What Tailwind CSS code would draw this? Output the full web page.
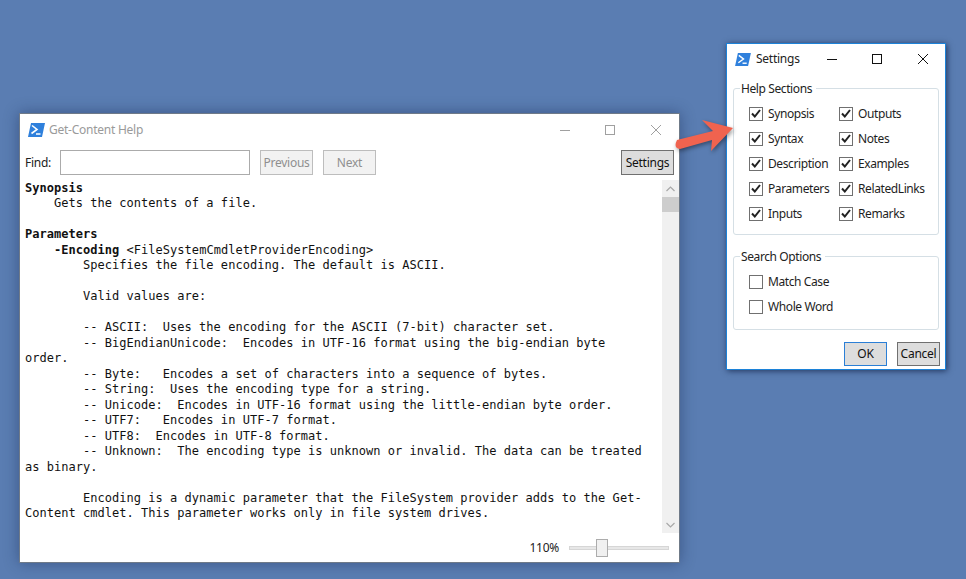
<!doctype html>
<html>
<head>
<meta charset="utf-8">
<script src="https://cdn.jsdelivr.net/npm/@tailwindcss/browser@4"></script>
</head>
<body class="bg-[#5a7db2] overflow-hidden">
<div class="relative w-[966px] h-[579px] overflow-hidden bg-[#5a7db2] font-['Noto_Sans',sans-serif] text-[12px] tracking-[-0.25px] text-[#1e1e1e]">

  <!-- Main help window -->
  <section class="absolute left-[19px] top-[113px] w-[661px] h-[450px] flex flex-col bg-white border border-[#6f7a88] shadow-[0_0_14px_rgba(20,40,80,0.45)]">
    <header class="h-[36px] shrink-0 flex items-center pl-[8px] pb-[5px]">
      <svg width="17" height="14" viewBox="0 0 17 14" class="shrink-0"><polygon points="3,0 17,0 14,14 0,14" fill="#2f80dc"/><path d="M4 2.5 L9 6.5 L3.5 10.5" fill="none" stroke="#fff" stroke-width="1.6"/><path d="M8 11 H12.5" stroke="#fff" stroke-width="1.5"/></svg>
      <span class="ml-[4px] text-[#9a9a9a]">Get-Content Help</span>
      <div class="ml-auto flex items-center text-[#a0a0a0]">
        <svg width="46" height="12" viewBox="0 0 46 12"><path d="M19 6.5 H29" stroke="#a0a0a0"/></svg>
        <svg width="46" height="12" viewBox="0 0 46 12"><rect x="18.5" y="1.5" width="9" height="9" fill="none" stroke="#a0a0a0"/></svg>
        <svg width="46" height="12" viewBox="0 0 46 12"><path d="M18 1 L28 11 M28 1 L18 11" stroke="#a0a0a0"/></svg>
      </div>
    </header>
    <div class="h-[25px] shrink-0 flex items-center pl-[5px] pr-[5px]">
      <span class="w-[35px] text-[#222]">Find:</span>
      <div class="w-[190px] h-[25px] border border-[#ababab] bg-white"></div>
      <div class="ml-[10px] w-[53px] h-[25px] flex items-center justify-center border border-[#bdbdbd] bg-[#f2f2f2] text-[#8f8f8f]">Previous</div>
      <div class="ml-[10px] w-[53px] h-[25px] flex items-center justify-center border border-[#bdbdbd] bg-[#f2f2f2] text-[#8f8f8f]">Next</div>
      <div class="ml-auto w-[53px] h-[25px] flex items-center justify-center border border-[#707070] bg-[#dddddd] text-[#111]">Settings</div>
    </div>
    <div class="flex-1 min-h-0 flex pt-[5px]">
      <pre class="flex-1 min-w-0 overflow-hidden pl-[5px] pt-[1px] font-['DejaVu_Sans_Mono',monospace] text-[12px] leading-[15.48px] tracking-[0.03px] text-[#111] whitespace-pre"><b>Synopsis</b>
    Gets the contents of a file.

<b>Parameters</b>
    <b>-Encoding</b> &lt;FileSystemCmdletProviderEncoding&gt;
        Specifies the file encoding. The default is ASCII.

        Valid values are:

        -- ASCII:  Uses the encoding for the ASCII (7-bit) character set.
        -- BigEndianUnicode:  Encodes in UTF-16 format using the big-endian byte
order.
        -- Byte:   Encodes a set of characters into a sequence of bytes.
        -- String:  Uses the encoding type for a string.
        -- Unicode:  Encodes in UTF-16 format using the little-endian byte order.
        -- UTF7:   Encodes in UTF-7 format.
        -- UTF8:  Encodes in UTF-8 format.
        -- Unknown:  The encoding type is unknown or invalid. The data can be treated
as binary.

        Encoding is a dynamic parameter that the FileSystem provider adds to the Get-
Content cmdlet. This parameter works only in file system drives.</pre>
      <div class="w-[17px] shrink-0 h-[353px] bg-[#f0f0f0] flex flex-col">
        <div class="h-[17px] shrink-0 flex items-center justify-center"><svg width="9" height="6" viewBox="0 0 9 6"><path d="M0.5 5 L4.5 1 L8.5 5" fill="none" stroke="#a8a8a8" stroke-width="1.2"/></svg></div>
        <div class="h-[15px] shrink-0 bg-[#cdcdcd]"></div>
        <div class="flex-1"></div>
        <div class="h-[17px] shrink-0 flex items-center justify-center"><svg width="9" height="6" viewBox="0 0 9 6"><path d="M0.5 1 L4.5 5 L8.5 1" fill="none" stroke="#a8a8a8" stroke-width="1.2"/></svg></div>
      </div>
    </div>
    <footer class="h-[28px] shrink-0 flex items-center justify-end pr-[10px]">
      <span class="text-[#222]">110%</span>
      <div class="relative ml-[10px] w-[100px] h-[4px] bg-[#e7e7e7] border border-[#d6d6d6]">
        <div class="absolute left-[26px] top-[-8px] w-[12px] h-[18px] bg-[#f0f0f0] border border-[#acacac]"></div>
      </div>
    </footer>
  </section>

  <!-- Settings dialog -->
  <section class="absolute left-[726px] top-[43px] w-[220px] h-[327px] flex flex-col bg-white border border-[#1c82d8] shadow-[1px_1px_6px_rgba(10,25,60,0.7)]">
    <header class="h-[30px] shrink-0 flex items-center pl-[8px]">
      <svg width="16" height="13" viewBox="0 0 17 14" class="shrink-0"><polygon points="3,0 17,0 14,14 0,14" fill="#2f80dc"/><path d="M4 2.5 L9 6.5 L3.5 10.5" fill="none" stroke="#fff" stroke-width="1.6"/><path d="M8 11 H12.5" stroke="#fff" stroke-width="1.5"/></svg>
      <span class="ml-[5px] text-[#222]">Settings</span>
      <div class="ml-auto flex items-center">
        <svg width="46" height="12" viewBox="0 0 46 12"><path d="M20 6.5 H30" stroke="#111"/></svg>
        <svg width="46" height="12" viewBox="0 0 46 12"><rect x="19.5" y="1.5" width="9" height="9" fill="none" stroke="#111"/></svg>
        <svg width="46" height="12" viewBox="0 0 46 12"><path d="M19 1 L29 11 M29 1 L19 11" stroke="#111"/></svg>
      </div>
    </header>
    <div class="flex-1 flex flex-col px-[6px] pt-[6px]">
      <fieldset class="h-[155px] border border-[#d5dfe5] rounded-[3px] pl-[15px] pt-[4px] m-0">
        <legend class="ml-[-9px] pl-[1px] pr-[4px] leading-[17px] tracking-[-0.4px] text-[#222]">Help Sections</legend>
        <div class="grid grid-cols-[90px_90px] auto-rows-[25px] tracking-[-0.4px]">
          <label class="flex items-center"><span class="w-[14px] h-[14px] border border-[#707070] flex items-center justify-center"><svg width="10" height="9" viewBox="0 0 10 9"><path d="M1 4.5 L3.8 7.5 L9 1" fill="none" stroke="#222" stroke-width="2"/></svg></span><span class="ml-[5px]">Synopsis</span></label>
          <label class="flex items-center"><span class="w-[14px] h-[14px] border border-[#707070] flex items-center justify-center"><svg width="10" height="9" viewBox="0 0 10 9"><path d="M1 4.5 L3.8 7.5 L9 1" fill="none" stroke="#222" stroke-width="2"/></svg></span><span class="ml-[5px]">Outputs</span></label>
          <label class="flex items-center"><span class="w-[14px] h-[14px] border border-[#707070] flex items-center justify-center"><svg width="10" height="9" viewBox="0 0 10 9"><path d="M1 4.5 L3.8 7.5 L9 1" fill="none" stroke="#222" stroke-width="2"/></svg></span><span class="ml-[5px]">Syntax</span></label>
          <label class="flex items-center"><span class="w-[14px] h-[14px] border border-[#707070] flex items-center justify-center"><svg width="10" height="9" viewBox="0 0 10 9"><path d="M1 4.5 L3.8 7.5 L9 1" fill="none" stroke="#222" stroke-width="2"/></svg></span><span class="ml-[5px]">Notes</span></label>
          <label class="flex items-center"><span class="w-[14px] h-[14px] border border-[#707070] flex items-center justify-center"><svg width="10" height="9" viewBox="0 0 10 9"><path d="M1 4.5 L3.8 7.5 L9 1" fill="none" stroke="#222" stroke-width="2"/></svg></span><span class="ml-[5px]">Description</span></label>
          <label class="flex items-center"><span class="w-[14px] h-[14px] border border-[#707070] flex items-center justify-center"><svg width="10" height="9" viewBox="0 0 10 9"><path d="M1 4.5 L3.8 7.5 L9 1" fill="none" stroke="#222" stroke-width="2"/></svg></span><span class="ml-[5px]">Examples</span></label>
          <label class="flex items-center"><span class="w-[14px] h-[14px] border border-[#707070] flex items-center justify-center"><svg width="10" height="9" viewBox="0 0 10 9"><path d="M1 4.5 L3.8 7.5 L9 1" fill="none" stroke="#222" stroke-width="2"/></svg></span><span class="ml-[5px]">Parameters</span></label>
          <label class="flex items-center"><span class="w-[14px] h-[14px] border border-[#707070] flex items-center justify-center"><svg width="10" height="9" viewBox="0 0 10 9"><path d="M1 4.5 L3.8 7.5 L9 1" fill="none" stroke="#222" stroke-width="2"/></svg></span><span class="ml-[5px]">RelatedLinks</span></label>
          <label class="flex items-center"><span class="w-[14px] h-[14px] border border-[#707070] flex items-center justify-center"><svg width="10" height="9" viewBox="0 0 10 9"><path d="M1 4.5 L3.8 7.5 L9 1" fill="none" stroke="#222" stroke-width="2"/></svg></span><span class="ml-[5px]">Inputs</span></label>
          <label class="flex items-center"><span class="w-[14px] h-[14px] border border-[#707070] flex items-center justify-center"><svg width="10" height="9" viewBox="0 0 10 9"><path d="M1 4.5 L3.8 7.5 L9 1" fill="none" stroke="#222" stroke-width="2"/></svg></span><span class="ml-[5px]">Remarks</span></label>
        </div>
      </fieldset>
      <fieldset class="mt-[13px] h-[82px] border border-[#d5dfe5] rounded-[3px] pl-[15px] pt-[4px] m-0">
        <legend class="ml-[-9px] pl-[1px] pr-[4px] leading-[17px] tracking-[-0.4px] text-[#222]">Search Options</legend>
        <div class="flex flex-col tracking-[-0.4px]">
          <label class="h-[25px] flex items-center"><span class="w-[14px] h-[14px] border border-[#707070]"></span><span class="ml-[5px]">Match Case</span></label>
          <label class="h-[25px] flex items-center"><span class="w-[14px] h-[14px] border border-[#707070]"></span><span class="ml-[5px]">Whole Word</span></label>
        </div>
      </fieldset>
      <div class="mt-[12px] mr-[-1px] flex justify-end gap-[10px]">
        <div class="w-[43px] h-[24px] flex items-center justify-center border border-[#2b7fd6] bg-[#dddddd] text-[#111]">OK</div>
        <div class="w-[43px] h-[24px] flex items-center justify-center border border-[#707070] bg-[#dddddd] text-[#111]">Cancel</div>
      </div>
    </div>
  </section>

  <!-- Callout arrow -->
  <svg class="absolute left-[660px] top-[105px] drop-shadow-[1px_2px_2px_rgba(0,0,0,0.4)]" width="90" height="60" viewBox="660 105 90 60">
    <path d="M677 140 L713 131 L702 120 L733 128 L711 151 L712 140 L680 149 Q673 148 677 140 Z" fill="#f0634f"/>
  </svg>
</div>
</body>
</html>
